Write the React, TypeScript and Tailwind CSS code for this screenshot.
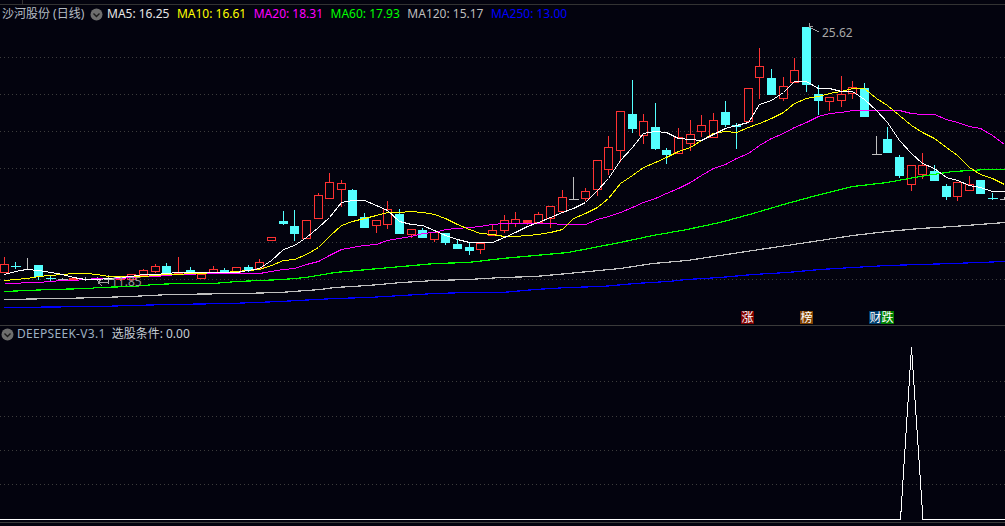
const candleX = (i: number) => Math.floor(4 + 11.63 * i) + 0.5;

// kind, body top, body bottom, high, low (screen y)
// r = hollow red, f = solid red, c = solid cyan, x = cyan cross, g = grey cross
type Candle = [string, number, number, number, number];
const candles: Candle[] = [
  ["r", 264, 272, 257, 272],
  ["x", 266, 266, 262, 269],
  ["g", 269, 269, 258, 270],
  ["c", 265, 276, 265, 280],
  ["x", 278, 278, 275, 281],
  ["g", 279, 279, 278, 281],
  ["f", 278, 280, 278, 280],
  ["g", 279, 279, 277, 281],
  ["g", 279, 279, 277, 281],
  ["g", 279, 279, 275, 284],
  ["r", 277, 279, 276, 281],
  ["r", 274, 279, 274, 281],
  ["r", 270, 275, 269, 276],
  ["r", 266, 271, 264, 273],
  ["c", 266, 272, 263, 273],
  ["f", 272, 274, 257, 275],
  ["c", 270, 273, 267, 275],
  ["r", 274, 278, 274, 279],
  ["r", 269, 272, 266, 272],
  ["c", 270, 272, 268, 273],
  ["r", 267, 272, 267, 272],
  ["c", 267, 269, 265, 272],
  ["r", 262, 268, 259, 269],
  ["r", 237, 240, 237, 241],
  ["c", 221, 223, 211, 225],
  ["c", 226, 233, 210, 241],
  ["r", 220, 238, 220, 238],
  ["r", 195, 218, 193, 218],
  ["r", 182, 198, 173, 199],
  ["r", 183, 189, 180, 207],
  ["c", 190, 215, 189, 215],
  ["c", 217, 227, 213, 228],
  ["r", 220, 225, 220, 233],
  ["r", 209, 224, 201, 229],
  ["c", 214, 233, 209, 234],
  ["r", 229, 234, 229, 238],
  ["c", 230, 237, 228, 237],
  ["r", 232, 239, 232, 242],
  ["c", 233, 242, 233, 245],
  ["c", 244, 248, 240, 249],
  ["c", 247, 250, 243, 255],
  ["r", 243, 249, 243, 254],
  ["r", 230, 235, 224, 235],
  ["r", 220, 230, 215, 233],
  ["r", 219, 223, 212, 227],
  ["f", 220, 222, 220, 225],
  ["r", 214, 222, 212, 222],
  ["r", 206, 218, 206, 228],
  ["r", 197, 211, 190, 212],
  ["g", 199, 199, 177, 200],
  ["r", 191, 198, 188, 201],
  ["r", 160, 189, 160, 196],
  ["r", 147, 169, 136, 175],
  ["r", 111, 150, 111, 162],
  ["c", 114, 128, 80, 133],
  ["r", 121, 135, 114, 144],
  ["c", 127, 148, 103, 150],
  ["c", 150, 154, 148, 164],
  ["r", 137, 153, 128, 153],
  ["r", 134, 143, 120, 151],
  ["r", 125, 131, 115, 137],
  ["r", 120, 137, 113, 137],
  ["c", 112, 124, 101, 127],
  ["c", 125, 126, 123, 149],
  ["r", 88, 121, 88, 121],
  ["r", 66, 77, 48, 99],
  ["c", 78, 94, 69, 94],
  ["r", 86, 98, 77, 101],
  ["r", 70, 82, 58, 82],
  ["c", 27, 84, 27, 92],
  ["c", 94, 100, 85, 115],
  ["r", 97, 101, 97, 111],
  ["r", 94, 100, 76, 107],
  ["r", 87, 93, 81, 99],
  ["c", 88, 116, 83, 117],
  ["g", 154, 154, 136, 155],
  ["c", 139, 152, 127, 152],
  ["c", 157, 175, 155, 178],
  ["r", 165, 184, 165, 191],
  ["r", 165, 174, 153, 179],
  ["c", 171, 180, 165, 181],
  ["c", 186, 196, 184, 200],
  ["r", 182, 196, 182, 201],
  ["r", 184, 190, 176, 191],
  ["c", 180, 193, 180, 193],
  ["x", 198, 198, 193, 200],
  ["g", 199, 199, 197, 200],
];

const ma5 = [274, 271, 269, 270, 272, 274, 277, 279, 279, 278, 277, 276, 274, 274, 273, 272, 272, 272, 272, 272, 272, 270, 268, 260, 249, 245, 237, 227, 217, 202, 200, 200, 205, 210, 221, 224, 225, 230, 235, 239, 242, 242, 242, 237, 232, 226, 222, 217, 212, 208, 202, 190, 178, 160, 147, 133, 131, 132, 138, 139, 140, 134, 128, 125, 122, 104, 100, 92, 81, 81, 88, 88, 91, 91, 99, 110, 122, 140, 153, 163, 168, 177, 180, 185, 187, 191, 191];
const ma10 = [280, 279, 278, 276, 275, 274, 273, 273, 274, 276, 276, 276, 276, 275, 274, 274, 273, 273, 272, 272, 271, 270, 269, 265, 260, 259, 254, 247, 236, 225, 221, 218, 215, 212, 212, 211, 212, 214, 218, 224, 229, 233, 234, 236, 236, 235, 234, 232, 229, 218, 213, 207, 198, 183, 175, 167, 162, 157, 151, 147, 140, 133, 131, 132, 127, 123, 118, 112, 103, 98, 96, 93, 91, 88, 88, 98, 105, 115, 125, 132, 138, 147, 155, 167, 174, 178, 184];
const ma20 = [283, 283, 282, 282, 281, 280, 280, 279, 278, 278, 278, 277, 276, 276, 275, 274, 274, 273, 273, 273, 273, 273, 273, 271, 269, 268, 264, 261, 255, 249, 247, 245, 244, 240, 238, 236, 233, 232, 229, 228, 227, 226, 224, 223, 223, 223, 223, 223, 224, 224, 224, 219, 216, 212, 207, 202, 198, 193, 188, 182, 175, 168, 164, 158, 153, 145, 138, 133, 127, 122, 116, 113, 112, 110, 110, 110, 110, 110, 113, 114, 114, 119, 122, 126, 128, 135, 144];

const ma60: [number, number][] = [[4, 291], [27, 290], [50, 289], [90, 288], [97, 287], [132, 286], [155, 284], [178, 283], [213, 283], [237, 281], [260, 280], [283, 279], [306, 277], [335, 272], [368, 269], [402, 266], [435, 263], [468, 262], [502, 258], [535, 255], [568, 252], [620, 242], [653, 235], [687, 229], [720, 222], [753, 213], [787, 203], [820, 194], [853, 186], [887, 182], [920, 176], [953, 171], [987, 169], [1005, 169]];
const ma120: [number, number][] = [[4, 299], [60, 298], [100, 297], [130, 296], [170, 294], [240, 293], [280, 292], [320, 289], [335, 287], [368, 285], [402, 282], [435, 280], [468, 279], [502, 277], [535, 276], [568, 273], [620, 268], [653, 263], [687, 260], [720, 255], [753, 250], [787, 245], [820, 240], [853, 235], [887, 231], [920, 228], [953, 226], [1005, 222]];
const ma250: [number, number][] = [[4, 307], [100, 306], [130, 305], [170, 304], [230, 303], [280, 301], [335, 298], [368, 297], [402, 295], [435, 293], [468, 292], [502, 292], [535, 289], [568, 287], [602, 286], [635, 283], [668, 281], [687, 279], [720, 277], [753, 274], [787, 272], [820, 269], [853, 267], [887, 265], [920, 264], [953, 263], [1005, 261]];

const daily = (ys: number[]) => ys.map((y, i) => `${candleX(i)},${y + 0.5}`).join(" ");
const pairs = (pts: [number, number][]) => pts.map(([x, y]) => `${x},${y + 0.5}`).join(" ");

const legend = [
  { label: "MA5: 16.25", color: "text-[#e6e6e6]" },
  { label: "MA10: 16.61", color: "text-[#ffff00]" },
  { label: "MA20: 18.31", color: "text-[#ff00ff]" },
  { label: "MA60: 17.93", color: "text-[#00ff00]" },
  { label: "MA120: 15.17", color: "text-[#bdbdbd]" },
  { label: "MA250: 13.00", color: "text-[#0000ff]" },
];

function CandleMark({ c, i }: { c: Candle; i: number }) {
  const [kind, top, bottom, high, low] = c;
  const x = candleX(i);
  const red = "#ff3232";
  const cyan = "#54ffff";
  const grey = "#c0c0c0";
  if (kind === "x" || kind === "g") {
    const col = kind === "x" ? cyan : grey;
    return (
      <g stroke={col}>
        <line x1={x} x2={x} y1={high} y2={low} />
        <line x1={x - 5} x2={x + 5} y1={top + 0.5} y2={top + 0.5} />
      </g>
    );
  }
  const col = kind === "c" ? cyan : red;
  return (
    <g stroke={col}>
      <line x1={x} x2={x} y1={high} y2={top} />
      <line x1={x} x2={x} y1={bottom} y2={low} />
      <rect
        x={x - 4}
        y={top + 0.5}
        width={8}
        height={bottom - top}
        fill={kind === "r" ? "#03030e" : col}
      />
    </g>
  );
}

function Chevron() {
  return (
    <svg width="13" height="13" viewBox="0 0 13 13" className="shrink-0">
      <circle cx="6.5" cy="6.5" r="6" fill="#6e6e6e" />
      <path d="M3.5 5.5 L6.5 8.5 L9.5 5.5" fill="none" stroke="#1c1c1c" strokeWidth="1.4" />
    </svg>
  );
}

function Tag({ text, bg, left }: { text: string; bg: string; left: string }) {
  return (
    <div className={`absolute top-[311px] w-[13px] h-[13px] flex items-center justify-center text-[12px] leading-none text-white ${bg} ${left}`}>
      {text}
    </div>
  );
}

export default function App() {
  return (
    <div className="w-[1005px] h-[526px] overflow-hidden flex flex-col bg-[#03030e] font-['Noto_Sans','Noto_Sans_CJK_SC',sans-serif] text-[12px] leading-none whitespace-nowrap">
      {/* K line panel */}
      <section className="relative h-[326px] shrink-0 border-b border-[#3a3a3a]">
        <svg className="absolute inset-0" width="1005" height="325" viewBox="0 0 1005 325" shapeRendering="crispEdges">
          <line x1="0" x2="1005" y1="4.5" y2="4.5" stroke="#333" />
          <line x1="22.5" x2="22.5" y1="0" y2="4" stroke="#333" />
          {[57, 94, 131, 168, 205, 242, 279].map((y) => (
            <line key={y} x1="0" x2="1005" y1={y + 0.5} y2={y + 0.5} stroke="#3c3c3c" strokeDasharray="1 3" />
          ))}
          {candles.map((c, i) => (
            <CandleMark key={i} c={c} i={i} />
          ))}
          <g fill="none" strokeWidth="1.2">
            <polyline points={pairs(ma250)} stroke="#0000ff" />
            <polyline points={pairs(ma120)} stroke="#c0c0c0" />
            <polyline points={pairs(ma60)} stroke="#00ff00" />
          </g>
          <g fill="none" strokeWidth="1">
            <polyline points={daily(ma20)} stroke="#ff00ff" />
            <polyline points={daily(ma10)} stroke="#ffff00" />
            <polyline points={daily(ma5)} stroke="#ffffff" />
          </g>
          <path d="M98 282.5 H109 M98 282.5 L102 279 M98 282.5 L102 286" fill="none" stroke="#a0a0a0" />
          <path d="M809 27 L819 32 M809 27 L810 23 M809 27 L813 26" fill="none" stroke="#a0a0a0" />
        </svg>

        <header className="absolute left-[2px] top-[7px] flex items-center h-[14px]">
          <span className="text-[#b4bcc4] w-[88px]">沙河股份 (日线)</span>
          <Chevron />
          <div className="flex gap-[7.5px] ml-[4px]">
            {legend.map((m) => (
              <span key={m.label} className={m.color}>
                {m.label}
              </span>
            ))}
          </div>
        </header>

        <span className="absolute left-[111px] top-[276px] text-[#9a9a9a]">11.85</span>
        <span className="absolute left-[822px] top-[27px] text-[#a8a8a8]">25.62</span>

        <Tag text="涨" bg="bg-[#7f0000]" left="left-[741px]" />
        <Tag text="榜" bg="bg-[#7f4000]" left="left-[800px]" />
        <Tag text="财" bg="bg-[#003f6f]" left="left-[869px]" />
        <Tag text="跌" bg="bg-[#007f00]" left="left-[881px]" />
      </section>

      {/* indicator panel */}
      <section className="relative flex-1">
        <svg className="absolute inset-0" width="1005" height="200" viewBox="0 326 1005 200" shapeRendering="crispEdges">
          {[381, 416, 450, 484].map((y) => (
            <line key={y} x1="0" x2="1005" y1={y + 0.5} y2={y + 0.5} stroke="#3c3c3c" strokeDasharray="1 3" />
          ))}
          <line x1="0" x2="1005" y1="522.5" y2="522.5" stroke="#3a3a3a" />
          <polyline points="0,519.5 900.5,519.5 911.5,347 923,519.5 1005,519.5" fill="none" stroke="#ffffff" />
        </svg>
        <div className="absolute left-[1px] top-[1px] flex items-center h-[14px]">
          <Chevron />
          <span className="ml-[3px] text-[#9db0c2] tracking-[0.3px]">DEEPSEEK-V3.1</span>
          <span className="ml-[6px] text-[#c4ccd4]">选股条件: 0.00</span>
        </div>
      </section>
    </div>
  );
}
